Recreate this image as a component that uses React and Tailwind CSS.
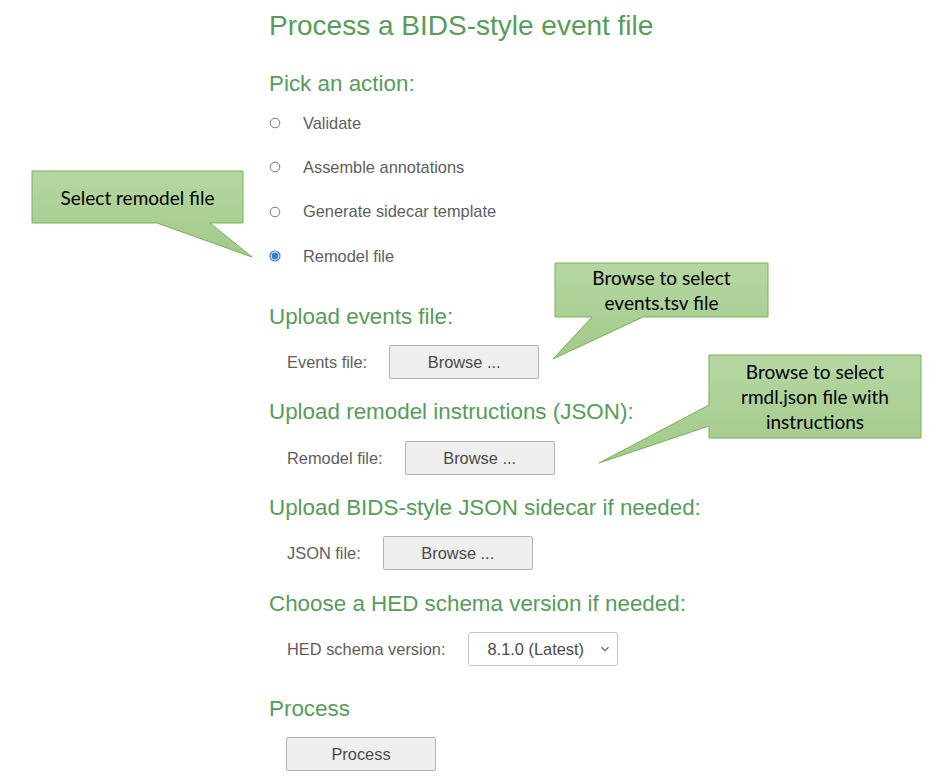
import React from 'react';

const actions = [
  { label: 'Validate', checked: false },
  { label: 'Assemble annotations', checked: false },
  { label: 'Generate sidecar template', checked: false },
  { label: 'Remodel file', checked: true },
];

const Radio = ({ checked }) => (
  <svg width="12" height="12" viewBox="0 0 12 12" className="shrink-0">
    {checked ? (
      <>
        <circle cx="6" cy="6" r="5" fill="#fff" stroke="#3d7be0" strokeWidth="1.2" />
        <circle cx="6" cy="6" r="3.4" fill="#3d7be0" />
      </>
    ) : (
      <circle cx="6" cy="6" r="4.8" fill="#fff" stroke="#7a7a7a" strokeWidth="1" />
    )}
  </svg>
);

const Heading = ({ children, className = '' }) => (
  <div className={`h-[36px] pb-[1px] flex items-center text-[22.4px] text-[#579c5a] ${className}`}>{children}</div>
);

const BrowseButton = ({ children = 'Browse ...' }) => (
  <div className="w-[150px] h-[34px] flex items-center justify-center bg-[#efefef] border border-[#b3b3b3] rounded-[2px] text-[16.4px] text-[#4a4a4a]">
    {children}
  </div>
);

const FileRow = ({ label, className = '' }) => (
  <div className={`flex items-center h-[34px] pl-[18px] gap-[22px] ${className}`}>
    <span className="text-[16.4px] text-[#5e5e5e]">{label}</span>
    <BrowseButton />
  </div>
);

const callouts = [
  {
    d: 'M32,171 H243 V223 H210 L252,257 L157,223 H32 Z',
    box: 'left-[32px] top-[171px] w-[211px] h-[52px]',
    lines: ['Select remodel file'],
  },
  {
    d: 'M555,263 H768 V317 H643 L553,359 L592,317 H555 Z',
    box: 'left-[555px] top-[263px] w-[213px] h-[54px]',
    lines: ['Browse to select', 'events.tsv file'],
  },
  {
    d: 'M709,355 H921 V438 H709 V426 L599,463 L709,405 Z',
    box: 'left-[709px] top-[355px] w-[212px] h-[83px]',
    lines: ['Browse to select', 'rmdl.json file with', 'instructions'],
  },
];

export default function App() {
  return (
    <div className="relative w-[944px] h-[784px] bg-white overflow-hidden font-['Liberation_Sans',Arial,sans-serif]">
      <div className="flex flex-col pl-[269px]">
        <div className="h-[52px] flex items-center text-[28px] text-[#579c5a]">Process a BIDS-style event file</div>
        <Heading className="mt-[14px]">Pick an action:</Heading>
        <div className="flex flex-col">
          {actions.map((a) => (
            <div key={a.label} className="h-[44.3px] flex items-center gap-[22px] first:mt-[-1px]">
              <Radio checked={a.checked} />
              <span className="text-[16.4px] text-[#5e5e5e]">{a.label}</span>
            </div>
          ))}
        </div>
        <Heading className="mt-[21px]">Upload events file:</Heading>
        <FileRow label="Events file:" className="mt-[10px]" />
        <Heading className="mt-[15px]">Upload remodel instructions (JSON):</Heading>
        <FileRow label="Remodel file:" className="mt-[11px]" />
        <Heading className="mt-[15px]">Upload BIDS-style JSON sidecar if needed:</Heading>
        <FileRow label="JSON file:" className="mt-[10px]" />
        <Heading className="mt-[16px]">Choose a HED schema version if needed:</Heading>
        <div className="flex items-center h-[34px] pl-[18px] gap-[22px] mt-[10px]">
          <span className="text-[16.4px] text-[#5e5e5e]">HED schema version:</span>
          <div className="w-[150px] h-[34px] flex items-center justify-between pl-[19px] pr-[7px] bg-white border border-[#c4c4c4] rounded-[3px] text-[16.4px] text-[#4a4a4a]">
            <span>8.1.0 (Latest)</span>
            <svg width="10" height="6" viewBox="0 0 10 6">
              <path d="M1.5 1.2 L5 4.6 L8.5 1.2" fill="none" stroke="#666" strokeWidth="1.2" />
            </svg>
          </div>
        </div>
        <Heading className="mt-[25px]">Process</Heading>
        <div className="pl-[17px] mt-[10px]">
          <BrowseButton>Process</BrowseButton>
        </div>
      </div>

      <svg className="absolute left-0 top-0" width="944" height="784" viewBox="0 0 944 784">
        <defs>
          <linearGradient id="calloutFill" x1="0" y1="0" x2="0" y2="1">
            <stop offset="0" stopColor="#b6d7a2" />
            <stop offset="1" stopColor="#a2c98a" />
          </linearGradient>
        </defs>
        {callouts.map((c) => (
          <path key={c.d} d={c.d} fill="url(#calloutFill)" stroke="#79b05a" strokeWidth="1" />
        ))}
      </svg>
      {callouts.map((c) => (
        <div
          key={c.box}
          className={`absolute ${c.box} flex flex-col items-center justify-center text-[19px] leading-[25px] text-black font-['Lato','Open_Sans',sans-serif]`}
        >
          {c.lines.map((l) => (
            <span key={l}>{l}</span>
          ))}
        </div>
      ))}
    </div>
  );
}
